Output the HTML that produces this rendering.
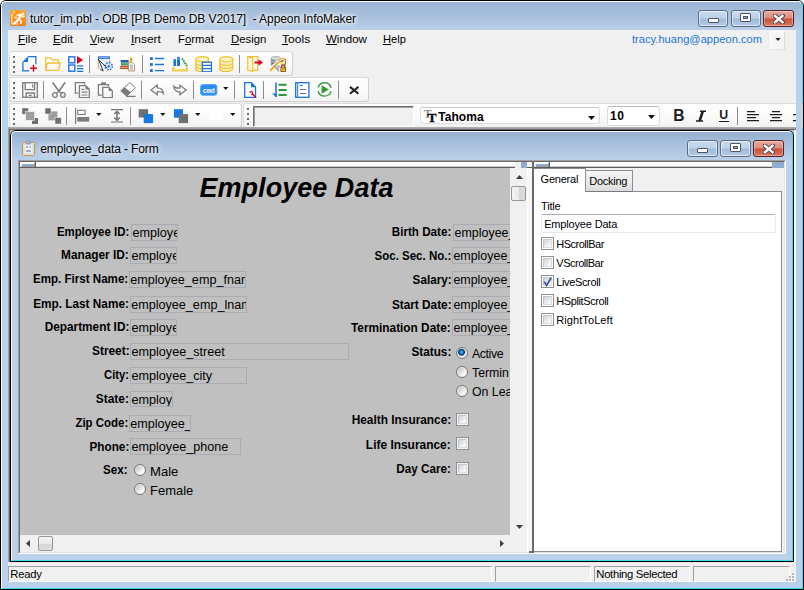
<!DOCTYPE html>
<html>
<head>
<meta charset="utf-8">
<title>tutor_im.pbl - ODB [PB Demo DB V2017] - Appeon InfoMaker</title>
<style>
*{box-sizing:border-box;margin:0;padding:0}
html,body{width:804px;height:590px;overflow:hidden;background:#b9d1ea;font-family:"Liberation Sans",sans-serif;font-size:12px;color:#000}
div,svg{position:absolute}
u{text-decoration:underline;text-underline-offset:1px}

.tb{background:linear-gradient(180deg,#fefefe 0,#fbfbfb 50%,#f2f2f2 100%);border:1px solid #d0d0d0;border-top-color:#dadada;border-left-color:#dcdcdc;border-radius:3px}
.g{width:2px;height:2px;background:#6a6a6a}
.sp{width:1px;background:#8c8c8c}
.fld{border:1px solid #ababb3;overflow:hidden}
.rad{width:12px;height:12px;border-radius:50%;border:1px solid #767676;background:linear-gradient(135deg,#b9b9b9 0,#dcdcdc 40%,#fdfdfd 75%,#fff 100%);box-shadow:inset 0 0 0 1px #f1f1f1}
.cb{width:13px;height:13px;border:1px solid #8e8f8f;background:#f4f4f4}
.cb i{position:absolute;left:1px;top:1px;width:9px;height:9px;border:1px solid #c3c6cc;border-right-color:#dcdde0;border-bottom-color:#dcdde0;background:linear-gradient(135deg,#cfd3da,#f7f7f8 80%)}
.cbw{width:13px;height:13px;border:1px solid #8e8f8f;background:#fff}
.cbw i{position:absolute;left:1px;top:1px;width:9px;height:9px;border:1px solid #c3c6cc;border-right-color:#dcdde0;border-bottom-color:#dcdde0;background:linear-gradient(135deg,#cfd3da,#f7f7f8 80%)}
.capb{border:1px solid #5d6c82;border-radius:3px;background:linear-gradient(180deg,#c6d9ef 0,#bdd2ea 48%,#9fbbd9 52%,#b4cbe6 100%);box-shadow:inset 0 0 0 1px rgba(255,255,255,.55)}
.capx{border:1px solid #5a1f24;border-radius:3px;background:linear-gradient(180deg,#e8a99b 0,#dd8c7c 48%,#c7513a 52%,#d8795f 100%);box-shadow:inset 0 0 0 1px rgba(255,255,255,.35)}

</style>
</head>
<body>
<div style="position:absolute;left:0px;top:0px;width:804px;height:590px;background:#fff"></div>
<div style="position:absolute;left:0px;top:0px;width:804px;height:590px;background:linear-gradient(180deg,#9ab4d4 0,#a7c0dd 15px,#b9cfe9 29px,#b9d1ea 36px,#b9d1ea 100%);border-radius:6px 6px 0 0;border:1px solid #000"></div>
<div style="position:absolute;left:1px;top:1px;width:802px;height:588px;border-radius:5px 5px 0 0;border:1px solid #fff;border-right-color:#35dcf2;border-bottom-color:#35dcf2"></div>
<div style="position:absolute;left:8px;top:30px;width:788px;height:552px;background:#f0f0f0"></div>
<svg style="left:10px;top:10px" width="16" height="16" viewBox="0 0 16 16"><defs><linearGradient id="og" x1="0" y1="0" x2="0" y2="1"><stop offset="0" stop-color="#ffa324"/><stop offset=".55" stop-color="#fb8f18"/><stop offset="1" stop-color="#f3790d"/></linearGradient></defs><rect x="0" y="0" width="16" height="16" rx="2.600" fill="url(#og)"/><path d="M1.900 3.600V14H8.500" fill="none" stroke="#fff" stroke-width="1.100" opacity=".92"/><rect x="3.300" y="1.400" width="1.500" height="1.700" fill="#fff" opacity=".9"/><path d="M4.300 7.500h2.800" stroke="#fff" stroke-width="1.500" opacity=".9"/><path d="M4.200 13.300L7.600 10.600 10.600 5.600" fill="none" stroke="#fff" stroke-width="2.300" stroke-linecap="round" stroke-linejoin="round"/><path d="M7.400 5.200L10.600 4.300 12.300 6.700 14 6.300M8.600 9.200L11.200 11 10.800 13.600" fill="none" stroke="#fff" stroke-width="1.500" stroke-linecap="round" stroke-linejoin="round"/><circle cx="13.100" cy="3.900" r="1.350" fill="#fff"/></svg>
<div style="position:absolute;left:30.00px;top:10.64px;font-size:12px;line-height:16px;white-space:pre;color:#000;letter-spacing:-0.073px;text-shadow:0 0 5px #fff,0 0 8px #fff,0 0 3px #fff;">tutor_im.pbl - ODB [PB Demo DB V2017]  - Appeon InfoMaker</div>
<div class="capb" style="position:absolute;left:698px;top:10px;width:30px;height:17px;"></div>
<div style="left:708px;top:18px;width:11px;height:5px;background:#fff;border:1px solid #4d5563;border-radius:1px"></div>
<div class="capb" style="position:absolute;left:731px;top:10px;width:30px;height:17px;"></div>
<div style="left:740px;top:13px;width:11px;height:9px;background:#fff;border:1px solid #4d5563;border-radius:1px"></div>
<div style="left:743px;top:16px;width:5px;height:3px;background:#8aa6c8;border:1px solid #4d5563"></div>
<div class="capx" style="position:absolute;left:763px;top:10px;width:31px;height:17px;"></div>
<svg style="left:773px;top:13.500px" width="11.500" height="10" viewBox="0 0 15 13"><path d="M2.2 2.2L12.8 10.8M12.8 2.2L2.2 10.8" stroke="#4a3b40" stroke-width="5.4" stroke-linecap="square"/><path d="M2.6 2.4L12.4 10.6M12.4 2.4L2.6 10.6" stroke="#fff" stroke-width="3.3" stroke-linecap="square"/></svg>
<div style="position:absolute;left:17.70px;top:32.08px;font-size:11.3px;line-height:15px;white-space:pre;color:#000;transform:scaleX(1.0380);transform-origin:0 50%;"><u>F</u>ile</div>
<div style="position:absolute;left:52.70px;top:32.08px;font-size:11.3px;line-height:15px;white-space:pre;color:#000;transform:scaleX(1.0220);transform-origin:0 50%;"><u>E</u>dit</div>
<div style="position:absolute;left:89.70px;top:32.08px;font-size:11.3px;line-height:15px;white-space:pre;color:#000;transform:scaleX(0.9840);transform-origin:0 50%;"><u>V</u>iew</div>
<div style="position:absolute;left:130.70px;top:32.08px;font-size:11.3px;line-height:15px;white-space:pre;color:#000;transform:scaleX(1.0580);transform-origin:0 50%;"><u>I</u>nsert</div>
<div style="position:absolute;left:177.70px;top:32.08px;font-size:11.3px;line-height:15px;white-space:pre;color:#000;transform:scaleX(1.0031);transform-origin:0 50%;">F<u>o</u>rmat</div>
<div style="position:absolute;left:230.70px;top:32.08px;font-size:11.3px;line-height:15px;white-space:pre;color:#000;transform:scaleX(1.0064);transform-origin:0 50%;"><u>D</u>esign</div>
<div style="position:absolute;left:281.70px;top:32.08px;font-size:11.3px;line-height:15px;white-space:pre;color:#000;transform:scaleX(1.0690);transform-origin:0 50%;"><u>T</u>ools</div>
<div style="position:absolute;left:325.70px;top:32.08px;font-size:11.3px;line-height:15px;white-space:pre;color:#000;transform:scaleX(1.0177);transform-origin:0 50%;"><u>W</u>indow</div>
<div style="position:absolute;left:382.70px;top:32.08px;font-size:11.3px;line-height:15px;white-space:pre;color:#000;transform:scaleX(0.9854);transform-origin:0 50%;"><u>H</u>elp</div>
<div style="position:absolute;left:631.70px;top:32.08px;font-size:11.3px;line-height:15px;white-space:pre;color:#1e74d6;transform:scaleX(0.9858);transform-origin:0 50%;">tracy.huang@appeon.com</div>
<div style="position:absolute;left:770px;top:31px;width:15px;height:19px;background:#f6f6f6;border:1px solid #fff;border-right-color:#dcdcdc;border-bottom-color:#e4e4e4"></div>
<svg style="left:775px;top:38px" width="6" height="3" viewBox="0 0 7 4"><path d="M0 0h7L3.5 4z" fill="#222"/></svg>
<div class="tb" style="left:9px;top:51px;width:284px;height:25px;"></div>
<div class="g" style="left:13px;top:56px"></div>
<div class="g" style="left:13px;top:61px"></div>
<div class="g" style="left:13px;top:66px"></div>
<div class="g" style="left:13px;top:71px"></div>
<div class="sp" style="left:89px;top:55px;height:18px"></div>
<div class="sp" style="left:142px;top:55px;height:18px"></div>
<div class="sp" style="left:239px;top:55px;height:18px"></div>
<div class="tb" style="left:9px;top:77px;width:360px;height:25px;"></div>
<div class="g" style="left:13px;top:82px"></div>
<div class="g" style="left:13px;top:87px"></div>
<div class="g" style="left:13px;top:92px"></div>
<div class="g" style="left:13px;top:97px"></div>
<div class="sp" style="left:43px;top:81px;height:18px"></div>
<div class="sp" style="left:141px;top:81px;height:18px"></div>
<div class="sp" style="left:193px;top:81px;height:18px"></div>
<div class="sp" style="left:234px;top:81px;height:18px"></div>
<div class="sp" style="left:263px;top:81px;height:18px"></div>
<div class="sp" style="left:338px;top:81px;height:18px"></div>
<div class="tb" style="left:9px;top:103px;width:233px;height:25px;"></div>
<div class="g" style="left:13px;top:108px"></div>
<div class="g" style="left:13px;top:113px"></div>
<div class="g" style="left:13px;top:118px"></div>
<div class="g" style="left:13px;top:123px"></div>
<div class="sp" style="left:66px;top:107px;height:18px"></div>
<div class="sp" style="left:130px;top:107px;height:18px"></div>
<div class="tb" style="left:243px;top:103px;width:560px;height:25px;border-radius:3px 0 0 3px"></div>
<div class="g" style="left:247px;top:108px"></div>
<div class="g" style="left:247px;top:113px"></div>
<div class="g" style="left:247px;top:118px"></div>
<div class="g" style="left:247px;top:123px"></div>
<div style="position:absolute;left:796px;top:30px;width:6px;height:552px;background:#b9d1ea"></div>
<svg style="left:22px;top:56px" width="16" height="16" viewBox="0 0 16 16"><path d="M6 0.7H13.9V8.3M0.9 6V14.9H7.2" fill="none" stroke="#1b73d9" stroke-width="1.3"/><path d="M0.5 6L6 0.3V6z" fill="#1b73d9"/><path d="M8 12.3h7M11.5 8.8v7" stroke="#e0001b" stroke-width="1.4"/></svg>
<svg style="left:45px;top:56px" width="16" height="16" viewBox="0 0 16 16"><path d="M0.7 14.4V1.9H5.6L7.2 3.9H13.4V6.9M2.3 7H15.2L13.4 14.4H0.7L2.3 7" fill="none" stroke="#f2c230" stroke-width="1.3" stroke-linejoin="round"/></svg>
<svg style="left:68px;top:56px" width="16" height="16" viewBox="0 0 16 16"><rect x="0.8" y="0.8" width="6" height="6" fill="none" stroke="#1b73d9" stroke-width="1.4"/><rect x="0.8" y="9" width="6" height="6.2" fill="none" stroke="#1b73d9" stroke-width="1.4"/><path d="M9 0L15.2 4 9 8z" fill="#e0001b"/><path d="M9 9.8h6.2M9 12.6h6.2M9 15.3h6.2" stroke="#1b73d9" stroke-width="1.2"/></svg>
<svg style="left:97px;top:56px" width="16" height="16" viewBox="0 0 16 16"><rect x="1" y="0.3" width="12" height="12.5" fill="#e6effa"/><rect x="1" y="0.3" width="12" height="2.6" fill="#2f6fd0"/><path d="M2 1.6h10" stroke="#9cc0ee" stroke-width=".8"/><path d="M1.3 3v10M12.7 3v4" stroke="#c8a067" stroke-width=".9"/><circle cx="11.7" cy="10.2" r="3.6" fill="#dce8f8" stroke="#2a6cc8" stroke-width="1.6" stroke-dasharray="1.5 1.3"/><circle cx="11.7" cy="10.2" r="1.2" fill="#2a6cc8"/><path d="M1.3 3L6.2 15M6.2 15l-3-1.6M2 4l8 8" stroke="#3a3a3a" stroke-width="1" fill="none"/></svg>
<svg style="left:120px;top:56px" width="16" height="16" viewBox="0 0 16 16"><rect x="0.6" y="4" width="8" height="2.2" fill="#1f5fbf"/><rect x="1" y="6.4" width="8" height="3" fill="#2f8a5c"/><path d="M2 7.9h6" stroke="#9fd0b0" stroke-width=".8"/><rect x="0.2" y="9.7" width="9" height="3.4" fill="#c4502c"/><path d="M1 11.4h7" stroke="#eaa868" stroke-width="1"/><path d="M8.6 6.6H12.5L14.6 8.6V15H8.6z" fill="#f6f6f0" stroke="#b79462" stroke-width=".9"/><path d="M10 9.3h3M10 11.2h3M10 13.1h3" stroke="#5a8fd0" stroke-width=".8"/><path d="M10.6 0.6c1.6 1 2.2 2.6 1.6 4.6-.3 1-2.6 1-2.6-.4 0-1 1-1.6 1-4.2z" fill="#f5a21c"/></svg>
<svg style="left:150px;top:56px" width="16" height="16" viewBox="0 0 16 16"><rect x="0" y="1.2" width="2.8" height="2.8" fill="#1b73d9"/><rect x="0" y="7.1" width="2.8" height="2.8" fill="#1b73d9"/><rect x="0" y="13.2" width="2.8" height="2.8" fill="#1b73d9"/><path d="M5 2.5h9M5 8.5h9M5 14.6h9" stroke="#1b73d9" stroke-width="1.3"/></svg>
<svg style="left:172px;top:56px" width="16" height="16" viewBox="0 0 16 16"><rect x="1.4" y="3" width="2.6" height="7" fill="#1b73d9"/><rect x="5" y="0.8" width="3" height="9.2" fill="#1b73d9"/><path d="M2.3 3v2M6 1v2.5M7.2 1v2.5" stroke="#8ec0f4" stroke-width=".7"/><path d="M10 2.5L15 10" stroke="#1f9a2c" stroke-width="2" stroke-dasharray="1.6 .9"/><path d="M0 10.8H2.4V13.2H13.6V10.8H16V15.4H0z" fill="#f4cc4e"/></svg>
<svg style="left:195px;top:56px" width="17" height="16" viewBox="0 0 17 16"><path d="M0.7 3.2v9.6c0 1.6 3 2.8 6.5 2.8s6.500-1.200 6.500-2.800V3.200" fill="#fcefb6" stroke="#f2c230" stroke-width="1.200"/><ellipse cx="7.200" cy="3.200" rx="6.500" ry="2.600" fill="#fdf3c4" stroke="#f2c230" stroke-width="1.200"/><path d="M0.700 6.400c0 1.600 3 2.800 6.500 2.800s6.500-1.200 6.500-2.800M0.700 9.700c0 1.600 3 2.800 6.500 2.800s6.500-1.200 6.500-2.800" fill="none" stroke="#f2c230" stroke-width="1.100"/><rect x="7.300" y="6.200" width="9.200" height="9.600" fill="#fff" stroke="#1b73d9" stroke-width="1.300"/><path d="M7.300 9.400h9.200M7.300 12.600h9.200" stroke="#1b73d9" stroke-width="1.300"/></svg>
<svg style="left:219px;top:56px" width="16" height="16" viewBox="0 0 16 16"><path d="M0.7 3.2v9.6c0 1.6 3 2.8 6.5 2.8s6.500-1.200 6.500-2.800V3.200" fill="#fcefb6" stroke="#f2c230" stroke-width="1.200"/><ellipse cx="7.200" cy="3.200" rx="6.500" ry="2.600" fill="#fdf3c4" stroke="#f2c230" stroke-width="1.200"/><path d="M0.700 6.400c0 1.600 3 2.800 6.500 2.800s6.500-1.200 6.500-2.800M0.700 9.700c0 1.600 3 2.800 6.500 2.800s6.500-1.200 6.500-2.800" fill="none" stroke="#f2c230" stroke-width="1.100"/></svg>
<svg style="left:247px;top:56px" width="16" height="16" viewBox="0 0 16 16"><path d="M0.700 0.700H10.800V14.300H6" fill="none" stroke="#f2c230" stroke-width="1.300"/><path d="M0.700 0.700L5.800 2V15.500L0.700 14.200z" fill="#fdf6d8" stroke="#f2c230" stroke-width="1.200" stroke-linejoin="round"/><path d="M7.600 6.500h5" stroke="#e0001b" stroke-width="2"/><path d="M11.600 3.300L16 6.500 11.600 9.700z" fill="#e0001b"/></svg>
<svg style="left:270px;top:56px" width="16" height="16" viewBox="0 0 16 16"><path d="M1 2.400V9.500L5.500 6.500V2.400z" fill="#777"/><path d="M1.200 3V9" stroke="#aaa" stroke-width=".8"/><ellipse cx="5.800" cy="2.300" rx="4.800" ry="1.900" fill="#c6e6e6" stroke="#9a9a9a" stroke-width=".7"/><path d="M4.200 2.900L8.600 1.300" stroke="#f5c6cf" stroke-width="1.400"/><path d="M1.500 5.800h3.500" stroke="#d8d8d8" stroke-width=".9"/><path d="M0 16L0.200 13 4 10 6 12.500 3 16z" fill="#fdf3c0"/><path d="M0 14.800L11.800 2.600" stroke="#f7a01e" stroke-width="1.700"/><path d="M9.300 5.200C10 3.400 12.600 2.300 14.300 3.200L14.800 8.600C13.600 10 11.200 10 10.300 8.600z" fill="#fde692"/><path d="M14.600 2.600C15.700 4 15.700 7.500 14.900 9.200" fill="none" stroke="#a86f1c" stroke-width="1.100"/><path d="M12 2.500L14.500 2.200" stroke="#f7a01e" stroke-width="1.200"/><circle cx="11.300" cy="5.500" r=".75" fill="#2458b8"/><circle cx="12.600" cy="4.700" r=".75" fill="#2458b8"/><path d="M3.600 9.300L10.200 9.200 8.600 15.500z" fill="#bdb6c8"/><path d="M5 9.600L8.200 11.500 6.500 9.800z" fill="#f2f2f6"/><path d="M3.600 9.300L8.600 15.500" stroke="#8a7a52" stroke-width=".8"/><path d="M11.600 11V9.800C11.600 8.600 14.600 8.600 14.600 9.800V11" fill="none" stroke="#6a4a1c" stroke-width="1.100"/><rect x="10.400" y="10.600" width="5.600" height="5.300" rx=".7" fill="#9b5c10"/><path d="M14.600 12.100H11.900V14.500H14.500V13.300H13.300" fill="none" stroke="#f8d45c" stroke-width="1"/></svg>
<svg style="left:22px;top:82px" width="16" height="16" viewBox="0 0 16 16"><rect x="0.700" y="0.700" width="14.600" height="14.600" fill="none" stroke="#7c7c7c" stroke-width="1.300"/><path d="M3.200 0.700V7.600H12.600V0.700M4.200 15.300V11H12.400V15.300" fill="none" stroke="#7c7c7c" stroke-width="1.300"/><path d="M10.600 2.300v3.400" stroke="#7c7c7c" stroke-width="1.100"/><rect x="6.700" y="12.800" width="3" height="1.200" fill="#7c7c7c"/></svg>
<svg style="left:51px;top:82px" width="16" height="16" viewBox="0 0 16 16"><path d="M1.600 0.300L7.900 9.300 14.200 0.300" fill="none" stroke="#7c7c7c" stroke-width="1.600" stroke-linejoin="miter"/><path d="M7.900 9.300L5.200 11.300M7.900 9.300L10.600 11.300" stroke="#7c7c7c" stroke-width="1.300"/><circle cx="3.900" cy="13" r="2.300" fill="none" stroke="#7c7c7c" stroke-width="1.300"/><circle cx="11.900" cy="13" r="2.300" fill="none" stroke="#7c7c7c" stroke-width="1.300"/></svg>
<svg style="left:74px;top:82px" width="16" height="16" viewBox="0 0 16 16"><path d="M4.200 11.200H1.400V0.700H10.500V2.600" fill="none" stroke="#7c7c7c" stroke-width="1.300"/><path d="M5.400 3.700H11.700L15.300 7.200V15.600H5.400z" fill="none" stroke="#7c7c7c" stroke-width="1.300"/><path d="M11.500 3.700L15.300 7.400H11.500z" fill="#7c7c7c"/><path d="M7.400 7.300h3M7.400 10.200h6M7.400 13h6" stroke="#7c7c7c" stroke-width="1.200"/></svg>
<svg style="left:97px;top:82px" width="16" height="16" viewBox="0 0 16 16"><path d="M4.800 13.200H1.400V2.600H11.600V4.600" fill="none" stroke="#7c7c7c" stroke-width="1.300"/><rect x="4" y="0.300" width="5" height="2.600" fill="#7c7c7c"/><path d="M5.800 5.400H11.800L15.300 8.800V15.600H5.800z" fill="none" stroke="#7c7c7c" stroke-width="1.300"/><path d="M11.600 5.400L15.300 9H11.600z" fill="#7c7c7c"/></svg>
<svg style="left:120px;top:82px" width="16" height="16" viewBox="0 0 16 16"><path d="M9.800 0.600L15.300 5.800 6.600 14.200 0.800 8.800z" fill="#fff" stroke="#7c7c7c" stroke-width="1"/><path d="M4.600 5.300L10.800 10.300 6.600 14.200 0.800 8.800z" fill="#7c7c7c"/><path d="M6.600 14.400H15.600" stroke="#7c7c7c" stroke-width="1.300"/></svg>
<svg style="left:150px;top:82px" width="16" height="16" viewBox="0 0 16 16"><path d="M1 7.900L7.300 3.100V5.900C10.400 5.900 13 7.600 13.400 11.400C12.200 9.900 10.400 9.600 7.300 9.700V12.700z" fill="none" stroke="#7c7c7c" stroke-width="1.300" stroke-linejoin="miter"/></svg>
<svg style="left:172px;top:82px" width="16" height="16" viewBox="0 0 16 16"><g transform="rotate(180 7.600 7.950)"><path d="M1 7.900L7.300 3.100V5.900C10.400 5.900 13 7.600 13.400 11.400C12.200 9.900 10.400 9.600 7.300 9.700V12.700z" fill="none" stroke="#7c7c7c" stroke-width="1.300" stroke-linejoin="miter"/></g></svg>
<svg style="left:200px;top:84px" width="18" height="12" viewBox="0 0 18 12"><rect x="0.600" y="0.600" width="16.300" height="10.600" rx="2.200" fill="#2c8cf0" stroke="#53a6f8" stroke-width="1"/><text x="8.700" y="8.600" font-family="Liberation Mono" font-size="7.500" font-weight="bold" fill="#fff" text-anchor="middle" textLength="12" lengthAdjust="spacingAndGlyphs">cmd</text></svg>
<svg style="left:223px;top:87px" width="5.5" height="3" viewBox="0 0 7 4"><path d="M0 0h7L3.500 4z" fill="#111"/></svg>
<svg style="left:244px;top:82px" width="13" height="16" viewBox="0 0 13 16"><path d="M0.700 0.700H7.200L11.500 5V15.300H0.700z" fill="#fff" stroke="#1b73d9" stroke-width="1.300"/><path d="M7 0.500L11.700 5.200H7z" fill="#1b73d9"/><path d="M5.500 10.300C7 9 8.600 9.600 8.600 11.200 8.600 12 8 12.600 7.200 12.600M8.300 11.800L12 15.600" fill="none" stroke="#e0001b" stroke-width="1.300"/></svg>
<svg style="left:272px;top:82px" width="16" height="16" viewBox="0 0 16 16"><path d="M4 0.500V15" stroke="#1b73d9" stroke-width="1.500"/><path d="M0 11.600H4.600V15.600z" fill="#1b73d9"/><path d="M6.500 2.800H14.600M6.500 7.900H14.600M6.500 13H14.600" stroke="#2e9b2e" stroke-width="2"/></svg>
<svg style="left:295px;top:82px" width="15" height="16" viewBox="0 0 15 16"><rect x="0.700" y="0.700" width="13.200" height="14.600" fill="#fff" stroke="#1b73d9" stroke-width="1.300"/><path d="M2.700 0.700V15.300" stroke="#1b73d9" stroke-width="1"/><path d="M5 3.500h2.600" stroke="#1b73d9" stroke-width="1.200"/><path d="M5 7.500h6.200M5 11.500h6.200" stroke="#6e6e6e" stroke-width="1.200"/></svg>
<svg style="left:317px;top:82px" width="16" height="16" viewBox="0 0 16 16"><circle cx="7.600" cy="7.400" r="6.700" fill="none" stroke="#3f9b3f" stroke-width="1.400" stroke-dasharray="17.500 3.500" stroke-dashoffset="-1.800"/><path d="M4.600 3.200V11.800L11.800 7.400z" fill="#2e9b2e"/></svg>
<svg style="left:349px;top:86px" width="11" height="9" viewBox="0 0 11 9"><path d="M1 0.900L9.400 7.700M9.400 0.900L1 7.700" stroke="#222" stroke-width="2"/></svg>
<svg style="left:22px;top:108px" width="16" height="16" viewBox="0 0 16 16"><rect x="0.200" y="0.200" width="6" height="6" fill="#707070"/><rect x="10" y="10" width="6" height="6" fill="#707070"/><rect x="3.600" y="3.600" width="8.800" height="8.800" fill="#9d9d9d" stroke="#f6f6f6" stroke-width=".6"/></svg>
<svg style="left:45px;top:108px" width="17" height="16" viewBox="0 0 17 16"><rect x="3.400" y="3.400" width="9" height="9" fill="#9d9d9d"/><rect x="0" y="0" width="6" height="6" fill="#707070" stroke="#f6f6f6" stroke-width=".5"/><rect x="10" y="9.600" width="6.200" height="6.400" fill="#707070" stroke="#f6f6f6" stroke-width=".5"/></svg>
<svg style="left:75px;top:108px" width="16" height="16" viewBox="0 0 16 16"><path d="M0.600 0V16" stroke="#7c7c7c" stroke-width="1.200"/><rect x="2.700" y="2.300" width="7.400" height="4.200" fill="#fff" stroke="#7c7c7c" stroke-width="1.100"/><rect x="2.200" y="9" width="12" height="4.600" fill="#7c7c7c"/></svg>
<svg style="left:110px;top:108px" width="14" height="16" viewBox="0 0 14 16"><path d="M1 1.600H13M1 14H13" stroke="#707070" stroke-width="1.200"/><path d="M7 4V11.600" stroke="#707070" stroke-width="1.600"/><path d="M4.300 6L7 3.200 9.700 6M4.300 9.600L7 12.400 9.700 9.600" fill="none" stroke="#707070" stroke-width="1.400"/></svg>
<svg style="left:138px;top:108px" width="16" height="16" viewBox="0 0 16 16"><rect x="0.700" y="1.200" width="9.400" height="8.300" fill="#707070"/><rect x="5.700" y="6.100" width="9.400" height="9" fill="#1679e2"/></svg>
<svg style="left:173px;top:108px" width="16" height="16" viewBox="0 0 16 16"><rect x="1" y="1.200" width="9" height="8.500" fill="#1679e2"/><rect x="5.700" y="6.100" width="9.400" height="9" fill="#707070"/></svg>
<svg style="left:96px;top:113px" width="5.5" height="3" viewBox="0 0 7 4"><path d="M0 0h7L3.500 4z" fill="#111"/></svg>
<svg style="left:160px;top:113px" width="5.5" height="3" viewBox="0 0 7 4"><path d="M0 0h7L3.500 4z" fill="#111"/></svg>
<svg style="left:194.5px;top:113px" width="5.5" height="3" viewBox="0 0 7 4"><path d="M0 0h7L3.500 4z" fill="#111"/></svg>
<svg style="left:230px;top:113px" width="5.5" height="3" viewBox="0 0 7 4"><path d="M0 0h7L3.500 4z" fill="#111"/></svg>
<div style="position:absolute;left:210px;top:108px;width:13px;height:12px;background:#fff"></div>
<div style="position:absolute;left:253px;top:106px;width:161px;height:21px;background:#f0f0f0;border:1px solid #6e6e6e;border-right-color:#fff;border-bottom-color:#fff;box-shadow:inset 1px 1px 0 #a0a0a0"></div>
<div style="position:absolute;left:420px;top:107px;width:180px;height:17px;background:#fff;border:1px solid #d9dde3;border-top-color:#c3c7cf;border-radius:3px"></div>
<svg style="left:423px;top:108px" width="14" height="16" viewBox="0 0 14 16"><text x="0.800" y="9.800" font-family="Liberation Serif" font-size="11.500" font-weight="bold" fill="#8c8c8c">T</text><text x="4.600" y="13.600" font-family="Liberation Serif" font-size="13.500" font-weight="bold" fill="#000" stroke="#000" stroke-width=".3">T</text></svg>
<div style="position:absolute;left:438.20px;top:109.24px;font-size:12px;line-height:16px;white-space:pre;color:#000;font-weight:bold;letter-spacing:0.080px;">Tahoma</div>
<svg style="left:588px;top:116px" width="7" height="4" viewBox="0 0 7 4"><path d="M0 0h7L3.500 4z" fill="#111"/></svg>
<div style="position:absolute;left:607px;top:106px;width:53px;height:20px;background:#fff;border:1px solid #d9dde3;border-top-color:#b9bdc6;border-radius:3px"></div>
<div style="position:absolute;left:610.00px;top:108.14px;font-size:12px;line-height:16px;white-space:pre;color:#000;font-weight:bold;letter-spacing:0.576px;">10</div>
<svg style="left:648px;top:115px" width="7" height="4" viewBox="0 0 7 4"><path d="M0 0h7L3.500 4z" fill="#111"/></svg>
<div style="position:absolute;left:673.20px;top:106.49px;font-size:15.6px;line-height:20px;white-space:pre;color:#1e1e1e;font-weight:bold;">B</div>
<svg style="left:695px;top:109px" width="12" height="14" viewBox="0 0 12 14"><path d="M5.200 1.500H11V3H8.900L6.200 11.200H8V12.700H1V11.200H3.500L6.200 3H4.700z" fill="#1e1e1e"/></svg>
<div style="position:absolute;left:719.20px;top:106.94px;font-size:12.3px;line-height:16px;white-space:pre;color:#1e1e1e;font-weight:bold;">U</div>
<div style="position:absolute;left:719px;top:121px;width:10px;height:1px;background:#1e1e1e"></div>
<div class="sp" style="left:737px;top:107px;height:18px"></div>
<div style="position:absolute;left:747px;top:111px;width:8px;height:1px;background:#1e1e1e;box-shadow:0 1px 0 rgba(30,30,30,.25)"></div>
<div style="position:absolute;left:747px;top:114px;width:12px;height:1px;background:#1e1e1e;box-shadow:0 1px 0 rgba(30,30,30,.25)"></div>
<div style="position:absolute;left:747px;top:117px;width:9px;height:1px;background:#1e1e1e;box-shadow:0 1px 0 rgba(30,30,30,.25)"></div>
<div style="position:absolute;left:747px;top:120px;width:12px;height:1px;background:#1e1e1e;box-shadow:0 1px 0 rgba(30,30,30,.25)"></div>
<div style="position:absolute;left:772px;top:111px;width:8px;height:1px;background:#1e1e1e;box-shadow:0 1px 0 rgba(30,30,30,.25)"></div>
<div style="position:absolute;left:770px;top:114px;width:12px;height:1px;background:#1e1e1e;box-shadow:0 1px 0 rgba(30,30,30,.25)"></div>
<div style="position:absolute;left:772px;top:117px;width:8px;height:1px;background:#1e1e1e;box-shadow:0 1px 0 rgba(30,30,30,.25)"></div>
<div style="position:absolute;left:770px;top:120px;width:12px;height:1px;background:#1e1e1e;box-shadow:0 1px 0 rgba(30,30,30,.25)"></div>
<div style="position:absolute;left:793px;top:114px;width:3px;height:1px;background:#1e1e1e;box-shadow:0 1px 0 rgba(30,30,30,.25)"></div>
<div style="position:absolute;left:793px;top:120px;width:3px;height:1px;background:#1e1e1e;box-shadow:0 1px 0 rgba(30,30,30,.25)"></div>
<div style="position:absolute;left:8px;top:127px;width:788px;height:1px;background:#ababab"></div>
<div style="position:absolute;left:8px;top:128px;width:788px;height:436px;background:#fff"></div>
<div style="position:absolute;left:8px;top:128px;width:788px;height:1px;background:#a0a0a0"></div>
<div style="position:absolute;left:8px;top:129px;width:788px;height:1px;background:#696969"></div>
<div style="position:absolute;left:10px;top:130px;width:784px;height:4px;background:#b8b8b8"></div>
<div style="position:absolute;left:8px;top:128px;width:1px;height:435px;background:#a0a0a0"></div>
<div style="position:absolute;left:9px;top:129px;width:1px;height:433px;background:#696969"></div>
<div style="position:absolute;left:8px;top:562px;width:788px;height:1px;background:#e3e3e3"></div>
<div style="position:absolute;left:10px;top:130px;width:784px;height:432px;background:linear-gradient(180deg,#93afd0 0,#a6bfdd 12px,#bcd2ea 30px,#b9d1ea 36px,#b9d1ea 100%);border:1px solid #000;border-radius:6px 6px 0 0"></div>
<div style="position:absolute;left:11px;top:131px;width:782px;height:430px;border:1px solid #fff;border-right-color:#35dcf2;border-bottom-color:#35dcf2;border-radius:5px 5px 0 0"></div>
<svg style="left:22px;top:140px" width="13" height="16" viewBox="0 0 13 16"><rect x="0.5" y="2.5" width="12" height="13" rx="1" fill="#f3ead6" stroke="#c79b4e"/><rect x="2" y="4" width="9" height="10" fill="#eef2fa" stroke="#b9c3d6" stroke-width=".6"/><rect x="4" y="0.8" width="5" height="3.2" rx="1" fill="#9fb0c9" stroke="#7d8ea8" stroke-width=".6"/><path d="M4 7h2M7.5 7h1.5M4 11h5" stroke="#5b6d94" stroke-width="1.2"/></svg>
<div style="position:absolute;left:40.20px;top:140.84px;font-size:12px;line-height:16px;white-space:pre;color:#000;letter-spacing:-0.116px;text-shadow:0 0 5px #fff,0 0 8px #fff;">employee_data - Form</div>
<div class="capb" style="position:absolute;left:687px;top:140px;width:31px;height:17px;"></div>
<div style="left:697px;top:148px;width:11px;height:5px;background:#fff;border:1px solid #4d5563;border-radius:1px"></div>
<div class="capb" style="position:absolute;left:720px;top:140px;width:31px;height:17px;"></div>
<div style="left:730px;top:143px;width:11px;height:9px;background:#fff;border:1px solid #4d5563;border-radius:1px"></div>
<div style="left:733px;top:146px;width:5px;height:3px;background:#8aa6c8;border:1px solid #4d5563"></div>
<div class="capx" style="position:absolute;left:753px;top:140px;width:31px;height:17px;"></div>
<svg style="left:763px;top:143.500px" width="11.500" height="10" viewBox="0 0 15 13"><path d="M2.2 2.2L12.8 10.8M12.8 2.2L2.2 10.8" stroke="#4a3b40" stroke-width="5.4" stroke-linecap="square"/><path d="M2.6 2.4L12.4 10.6M12.4 2.4L2.6 10.6" stroke="#fff" stroke-width="3.3" stroke-linecap="square"/></svg>
<div style="position:absolute;left:18px;top:160px;width:768px;height:394px;background:#f0f0f0;border:1px solid #a0a0a0;border-right-color:#fff;border-bottom-color:#fff"></div>
<div style="position:absolute;left:19px;top:161px;width:766px;height:392px;border:1px solid #696969;border-right-color:#e3e3e3;border-bottom-color:#e3e3e3"></div>
<div style="position:absolute;left:20px;top:162px;width:495px;height:5px;background:linear-gradient(180deg,#fff 0,#fff 4px,#cfcfcf 4px,#cfcfcf 5px)"></div>
<div style="position:absolute;left:20px;top:167px;width:495px;height:1px;background:#5c5c5c"></div>
<div style="position:absolute;left:20px;top:162px;width:15px;height:5px;background:#8fabd0;border-top:2px solid #fff;border-left:2px solid #fff;border-right:1px solid #8d8d8d;border-bottom:1px solid #9a9a9a"></div>
<div style="position:absolute;left:35px;top:162px;width:1px;height:5px;background:#5c5c5c"></div>
<div style="position:absolute;left:515px;top:162px;width:6px;height:6px;background:#f0f0f0"></div>
<div style="position:absolute;left:521px;top:162px;width:6px;height:6px;background:#8fabd0"></div>
<div style="position:absolute;left:534px;top:162px;width:250px;height:5px;background:linear-gradient(180deg,#fff 0,#fff 4px,#cfcfcf 4px,#cfcfcf 5px)"></div>
<div style="position:absolute;left:534px;top:167px;width:250px;height:1px;background:#5c5c5c"></div>
<div style="position:absolute;left:534px;top:162px;width:15px;height:5px;background:#8fabd0;border-top:2px solid #fff;border-left:2px solid #fff;border-right:1px solid #8d8d8d;border-bottom:1px solid #9a9a9a"></div>
<div style="position:absolute;left:549px;top:162px;width:1px;height:5px;background:#5c5c5c"></div>
<div style="position:absolute;left:772px;top:162px;width:12px;height:6px;background:#8fabd0"></div>
<div style="position:absolute;left:20px;top:168px;width:490px;height:367px;background:#c0c0c0"></div>
<div style="position:absolute;left:510px;top:168px;width:17px;height:367px;background:#f0f0f0"></div>
<div style="position:absolute;left:20px;top:535px;width:507px;height:17px;background:#f0f0f0"></div>
<div style="position:absolute;left:511px;top:186px;width:15px;height:15px;border:1px solid #979797;border-radius:2px;background:linear-gradient(90deg,#f4f4f4 0,#eaeaea 50%,#d4d4d4 52%,#dedede 100%)"></div>
<div style="position:absolute;left:38px;top:536px;width:15px;height:15px;border:1px solid #979797;border-radius:2px;background:linear-gradient(180deg,#f4f4f4 0,#eaeaea 50%,#d4d4d4 52%,#dedede 100%)"></div>
<svg style="left:516px;top:175px" width="7" height="4" viewBox="0 0 9 5"><path d="M0 5h9L4.5 0z" fill="#3c3c3c"/></svg>
<svg style="left:516px;top:525px" width="7" height="4" viewBox="0 0 9 5"><path d="M0 0h9L4.5 5z" fill="#3c3c3c"/></svg>
<svg style="left:26px;top:540px" width="4" height="7" viewBox="0 0 5 9"><path d="M5 0v9L0 4.5z" fill="#3c3c3c"/></svg>
<svg style="left:500px;top:540px" width="4" height="7" viewBox="0 0 5 9"><path d="M0 0v9L5 4.5z" fill="#3c3c3c"/></svg>
<div style="position:absolute;left:527px;top:162px;width:5px;height:390px;background:#f6f6f6"></div>
<div style="position:absolute;left:527px;top:162px;width:1px;height:390px;background:#fff"></div>
<div style="position:absolute;left:527px;top:167px;width:5px;height:1px;background:#5c5c5c"></div>
<div style="position:absolute;left:532px;top:162px;width:2px;height:391px;background:#6a6a6a"></div>
<div style="position:absolute;left:529px;top:551px;width:5px;height:2px;background:#6a6a6a"></div>
<div style="left:20px;top:168px;width:490px;height:367px;overflow:hidden">
<div style="position:absolute;left:179.50px;top:2.54px;font-size:27px;line-height:35px;white-space:pre;color:#000;font-weight:bold;font-style:italic;letter-spacing:0.033px;">Employee Data</div>
<div style="position:absolute;left:31.91px;top:56.47px;font-size:12.2px;line-height:16px;white-space:pre;color:#000;font-weight:bold;transform:scaleX(0.9368);transform-origin:100% 50%;">Employee ID:</div>
<div style="position:absolute;left:39.38px;top:79.17px;font-size:12.2px;line-height:16px;white-space:pre;color:#000;font-weight:bold;transform:scaleX(0.9696);transform-origin:100% 50%;">Manager ID:</div>
<div style="position:absolute;left:8.17px;top:102.87px;font-size:12.2px;line-height:16px;white-space:pre;color:#000;font-weight:bold;transform:scaleX(0.9508);transform-origin:100% 50%;">Emp. First Name:</div>
<div style="position:absolute;left:9.92px;top:127.97px;font-size:12.2px;line-height:16px;white-space:pre;color:#000;font-weight:bold;transform:scaleX(0.9678);transform-origin:100% 50%;">Emp. Last Name:</div>
<div style="position:absolute;left:21.76px;top:150.97px;font-size:12.2px;line-height:16px;white-space:pre;color:#000;font-weight:bold;transform:scaleX(0.9698);transform-origin:100% 50%;">Department ID:</div>
<div style="position:absolute;left:70.56px;top:174.87px;font-size:12.2px;line-height:16px;white-space:pre;color:#000;font-weight:bold;transform:scaleX(0.9730);transform-origin:100% 50%;">Street:</div>
<div style="position:absolute;left:82.09px;top:198.97px;font-size:12.2px;line-height:16px;white-space:pre;color:#000;font-weight:bold;transform:scaleX(0.9258);transform-origin:100% 50%;">City:</div>
<div style="position:absolute;left:75.30px;top:222.97px;font-size:12.2px;line-height:16px;white-space:pre;color:#000;font-weight:bold;transform:scaleX(0.9765);transform-origin:100% 50%;">State:</div>
<div style="position:absolute;left:51.95px;top:247.17px;font-size:12.2px;line-height:16px;white-space:pre;color:#000;font-weight:bold;transform:scaleX(0.9387);transform-origin:100% 50%;">Zip Code:</div>
<div style="position:absolute;left:67.86px;top:270.67px;font-size:12.2px;line-height:16px;white-space:pre;color:#000;font-weight:bold;transform:scaleX(0.9627);transform-origin:100% 50%;">Phone:</div>
<div style="position:absolute;left:82.13px;top:294.07px;font-size:12.2px;line-height:16px;white-space:pre;color:#000;font-weight:bold;transform:scaleX(0.9623);transform-origin:100% 50%;">Sex:</div>
<div class="fld" style="left:111px;top:56px;width:47px;height:17px"><div style="left:0.5px;top:-0.02px;font-size:12.62px;line-height:16px;white-space:pre">employee_id</div></div>
<div class="fld" style="left:110px;top:79px;width:47px;height:17px"><div style="left:0.5px;top:-0.02px;font-size:12.62px;line-height:16px;white-space:pre">employee_manager_id</div></div>
<div class="fld" style="left:109px;top:103px;width:117px;height:17px"><div style="left:0.2px;top:-0.02px;font-size:12.62px;line-height:16px;white-space:pre">employee_emp_fname</div></div>
<div class="fld" style="left:110px;top:128px;width:117px;height:17px"><div style="left:0.2px;top:-0.02px;font-size:12.62px;line-height:16px;white-space:pre">employee_emp_lname</div></div>
<div class="fld" style="left:110px;top:151px;width:47px;height:17px"><div style="left:0.5px;top:-0.02px;font-size:12.62px;line-height:16px;white-space:pre">employee_dept_id</div></div>
<div class="fld" style="left:110px;top:175px;width:219px;height:17px"><div style="left:0.5px;top:-0.02px;font-size:12.62px;line-height:16px;white-space:pre">employee_street</div></div>
<div class="fld" style="left:110px;top:199px;width:117px;height:17px"><div style="left:0.5px;top:-0.02px;font-size:12.62px;line-height:16px;white-space:pre">employee_city</div></div>
<div class="fld" style="left:110px;top:223px;width:43px;height:16px"><div style="left:0.5px;top:-0.02px;font-size:12.62px;line-height:16px;white-space:pre">employee_state</div></div>
<div class="fld" style="left:109px;top:247px;width:62px;height:17px"><div style="left:0.2px;top:-0.02px;font-size:12.62px;line-height:16px;white-space:pre">employee_zip_code</div></div>
<div class="fld" style="left:110px;top:270px;width:111px;height:17px"><div style="left:0.5px;top:-0.02px;font-size:12.62px;line-height:16px;white-space:pre">employee_phone</div></div>
<div class="rad" style="left:114px;top:296px"></div>
<div class="rad" style="left:114px;top:315px"></div>
<div style="position:absolute;left:129.80px;top:294.82px;font-size:13.5px;line-height:18px;white-space:pre;color:#000;transform:scaleX(0.9706);transform-origin:0 50%;">Male</div>
<div style="position:absolute;left:129.80px;top:313.82px;font-size:13.5px;line-height:18px;white-space:pre;color:#000;transform:scaleX(0.9619);transform-origin:0 50%;">Female</div>
<div style="position:absolute;left:368.84px;top:56.27px;font-size:12.2px;line-height:16px;white-space:pre;color:#000;font-weight:bold;transform:scaleX(0.9558);transform-origin:100% 50%;">Birth Date:</div>
<div style="position:absolute;left:349.84px;top:80.47px;font-size:12.2px;line-height:16px;white-space:pre;color:#000;font-weight:bold;transform:scaleX(0.9440);transform-origin:100% 50%;">Soc. Sec. No.:</div>
<div style="position:absolute;left:390.51px;top:104.47px;font-size:12.2px;line-height:16px;white-space:pre;color:#000;font-weight:bold;transform:scaleX(0.9609);transform-origin:100% 50%;">Salary:</div>
<div style="position:absolute;left:369.51px;top:129.27px;font-size:12.2px;line-height:16px;white-space:pre;color:#000;font-weight:bold;transform:scaleX(0.9693);transform-origin:100% 50%;">Start Date:</div>
<div style="position:absolute;left:328.39px;top:152.47px;font-size:12.2px;line-height:16px;white-space:pre;color:#000;font-weight:bold;transform:scaleX(0.9708);transform-origin:100% 50%;">Termination Date:</div>
<div style="position:absolute;left:389.85px;top:176.37px;font-size:12.2px;line-height:16px;white-space:pre;color:#000;font-weight:bold;transform:scaleX(0.9650);transform-origin:100% 50%;">Status:</div>
<div style="position:absolute;left:328.83px;top:244.47px;font-size:12.2px;line-height:16px;white-space:pre;color:#000;font-weight:bold;transform:scaleX(0.9739);transform-origin:100% 50%;">Health Insurance:</div>
<div style="position:absolute;left:344.42px;top:268.67px;font-size:12.2px;line-height:16px;white-space:pre;color:#000;font-weight:bold;transform:scaleX(0.9784);transform-origin:100% 50%;">Life Insurance:</div>
<div style="position:absolute;left:374.24px;top:293.47px;font-size:12.2px;line-height:16px;white-space:pre;color:#000;font-weight:bold;transform:scaleX(0.9585);transform-origin:100% 50%;">Day Care:</div>
<div class="fld" style="left:433px;top:56px;width:107px;height:17px"><div style="left:0.6px;top:0.04px;font-size:12.45px;line-height:16px;white-space:pre">employee_birth_date</div></div>
<div class="fld" style="left:432px;top:79px;width:108px;height:17px"><div style="left:0.4px;top:0.04px;font-size:12.45px;line-height:16px;white-space:pre">employee_ss_number</div></div>
<div class="fld" style="left:432px;top:103px;width:108px;height:17px"><div style="left:0.4px;top:0.04px;font-size:12.45px;line-height:16px;white-space:pre">employee_salary</div></div>
<div class="fld" style="left:432px;top:128px;width:108px;height:17px"><div style="left:0.4px;top:0.04px;font-size:12.45px;line-height:16px;white-space:pre">employee_start_date</div></div>
<div class="fld" style="left:432px;top:151px;width:108px;height:17px"><div style="left:0.4px;top:0.04px;font-size:12.45px;line-height:16px;white-space:pre">employee_termination_date</div></div>
<div class="rad" style="left:436px;top:179px;background:radial-gradient(circle at 45% 42%,#5cc4f6 0,#1f7ad0 1.500px,#0d3a6e 3px,#c9d6e2 3.800px,#eeeeee 4.600px,#d8d8d8 100%);box-shadow:none"></div>
<div class="rad" style="left:436px;top:198px"></div>
<div class="rad" style="left:436px;top:217px"></div>
<div style="position:absolute;left:452.00px;top:178.34px;font-size:12.3px;line-height:16px;white-space:pre;color:#000;letter-spacing:-0.382px;">Active</div>
<div style="position:absolute;left:452.00px;top:197.44px;font-size:12.3px;line-height:16px;white-space:pre;color:#000;">Termin</div>
<div style="position:absolute;left:452.00px;top:216.44px;font-size:12.3px;line-height:16px;white-space:pre;color:#000;">On Leave</div>
<div class="cb" style="left:436px;top:245px"><i></i></div>
<div class="cb" style="left:436px;top:269px"><i></i></div>
<div class="cb" style="left:436px;top:294px"><i></i></div>
</div>
<div style="position:absolute;left:534px;top:191px;width:248px;height:361px;background:#fff;border:1px solid #8c8e94;border-left:none"></div>
<div style="position:absolute;left:534px;top:168px;width:52px;height:24px;background:#fff;border:1px solid #8c8e94;border-left:none;border-bottom:none"></div>
<div style="position:absolute;left:586px;top:170px;width:47px;height:22px;background:linear-gradient(180deg,#f4f4f4 0,#ececec 55%,#dcdcdc 100%);border:1px solid #8c8e94;border-left:none;border-bottom-color:#77797f"></div>
<div style="position:absolute;left:540.60px;top:171.79px;font-size:11px;line-height:14px;white-space:pre;color:#000;letter-spacing:-0.233px;">General</div>
<div style="position:absolute;left:589.20px;top:173.99px;font-size:11px;line-height:14px;white-space:pre;color:#000;letter-spacing:-0.249px;">Docking</div>
<div style="position:absolute;left:541.00px;top:198.79px;font-size:11px;line-height:14px;white-space:pre;color:#000;letter-spacing:-0.175px;">Title</div>
<div style="position:absolute;left:541px;top:214px;width:235px;height:19px;background:#fff;border:1px solid #e3e9ef;border-top-color:#abadb3;border-radius:2px"></div>
<div style="position:absolute;left:544.20px;top:216.79px;font-size:11px;line-height:14px;white-space:pre;color:#000;letter-spacing:-0.170px;">Employee Data</div>
<div class="cbw" style="left:541px;top:237px"><i></i></div>
<div style="position:absolute;left:556.30px;top:236.89px;font-size:11px;line-height:14px;white-space:pre;color:#000;letter-spacing:-0.507px;">HScrollBar</div>
<div class="cbw" style="left:541px;top:256px"><i></i></div>
<div style="position:absolute;left:556.30px;top:255.89px;font-size:11px;line-height:14px;white-space:pre;color:#000;letter-spacing:-0.496px;">VScrollBar</div>
<div class="cbw" style="left:541px;top:275px"><i></i></div>
<svg style="left:543px;top:277px" width="10" height="10" viewBox="0 0 10 10"><path d="M1.2 4.6L3.6 8.4 8.2 0.8" stroke="#3b4ea0" stroke-width="1.7" fill="none"/></svg>
<div style="position:absolute;left:556.30px;top:274.89px;font-size:11px;line-height:14px;white-space:pre;color:#000;letter-spacing:-0.369px;">LiveScroll</div>
<div class="cbw" style="left:541px;top:294px"><i></i></div>
<div style="position:absolute;left:556.30px;top:293.89px;font-size:11px;line-height:14px;white-space:pre;color:#000;letter-spacing:-0.404px;">HSplitScroll</div>
<div class="cbw" style="left:541px;top:313px"><i></i></div>
<div style="position:absolute;left:556.30px;top:312.89px;font-size:11px;line-height:14px;white-space:pre;color:#000;letter-spacing:0.078px;">RightToLeft</div>
<div style="position:absolute;left:8px;top:564px;width:788px;height:18px;background:#f0f0f0"></div>
<div style="position:absolute;left:8px;top:566px;width:484px;height:16px;border:1px solid #a0a0a0;border-right-color:#fff;border-bottom-color:#fff"></div>
<div style="position:absolute;left:495px;top:566px;width:96px;height:16px;border:1px solid #a0a0a0;border-right-color:#fff;border-bottom-color:#fff"></div>
<div style="position:absolute;left:594px;top:566px;width:96px;height:16px;border:1px solid #a0a0a0;border-right-color:#fff;border-bottom-color:#fff"></div>
<div style="position:absolute;left:693px;top:566px;width:97px;height:16px;border:1px solid #a0a0a0;border-right-color:#fff;border-bottom-color:#fff"></div>
<div style="position:absolute;left:10.30px;top:566.88px;font-size:11.3px;line-height:15px;white-space:pre;color:#000;letter-spacing:-0.253px;">Ready</div>
<div style="position:absolute;left:596.30px;top:566.88px;font-size:11.3px;line-height:15px;white-space:pre;color:#000;letter-spacing:-0.316px;">Nothing Selected</div>
<div style="position:absolute;left:792px;top:573px;width:2px;height:2px;background:#b4b4b4;box-shadow:1px 1px 0 #fff"></div>
<div style="position:absolute;left:789px;top:576px;width:2px;height:2px;background:#b4b4b4;box-shadow:1px 1px 0 #fff"></div>
<div style="position:absolute;left:792px;top:576px;width:2px;height:2px;background:#b4b4b4;box-shadow:1px 1px 0 #fff"></div>
<div style="position:absolute;left:786px;top:579px;width:2px;height:2px;background:#b4b4b4;box-shadow:1px 1px 0 #fff"></div>
<div style="position:absolute;left:789px;top:579px;width:2px;height:2px;background:#b4b4b4;box-shadow:1px 1px 0 #fff"></div>
<div style="position:absolute;left:792px;top:579px;width:2px;height:2px;background:#b4b4b4;box-shadow:1px 1px 0 #fff"></div>
</body>
</html>
